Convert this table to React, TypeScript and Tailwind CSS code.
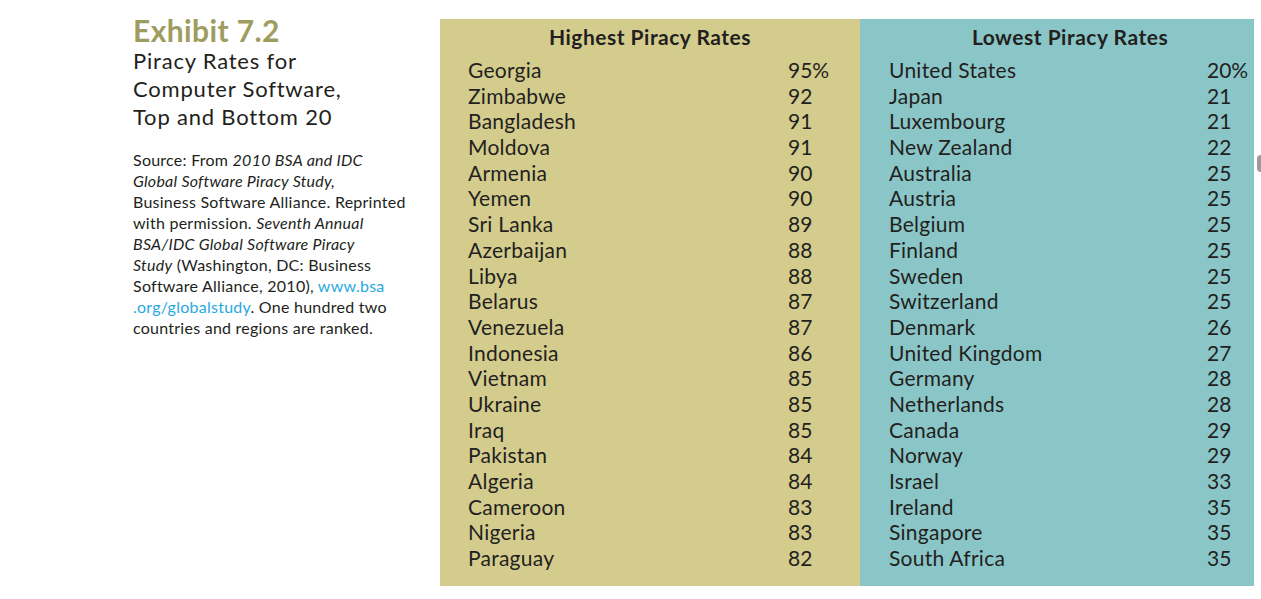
const highest: [string, string][] = [
  ["Georgia", "95%"],
  ["Zimbabwe", "92"],
  ["Bangladesh", "91"],
  ["Moldova", "91"],
  ["Armenia", "90"],
  ["Yemen", "90"],
  ["Sri Lanka", "89"],
  ["Azerbaijan", "88"],
  ["Libya", "88"],
  ["Belarus", "87"],
  ["Venezuela", "87"],
  ["Indonesia", "86"],
  ["Vietnam", "85"],
  ["Ukraine", "85"],
  ["Iraq", "85"],
  ["Pakistan", "84"],
  ["Algeria", "84"],
  ["Cameroon", "83"],
  ["Nigeria", "83"],
  ["Paraguay", "82"],
];

const lowest: [string, string][] = [
  ["United States", "20%"],
  ["Japan", "21"],
  ["Luxembourg", "21"],
  ["New Zealand", "22"],
  ["Australia", "25"],
  ["Austria", "25"],
  ["Belgium", "25"],
  ["Finland", "25"],
  ["Sweden", "25"],
  ["Switzerland", "25"],
  ["Denmark", "26"],
  ["United Kingdom", "27"],
  ["Germany", "28"],
  ["Netherlands", "28"],
  ["Canada", "29"],
  ["Norway", "29"],
  ["Israel", "33"],
  ["Ireland", "35"],
  ["Singapore", "35"],
  ["South Africa", "35"],
];

type PanelProps = {
  title: string;
  rows: [string, string][];
  className: string;
  headClass: string;
  rowClass: string;
};

function RatePanel({ title, rows, className, headClass, rowClass }: PanelProps) {
  return (
    <div className={`flex flex-col pb-[15px] ${className}`}>
      <div className={`flex h-[36px] items-center justify-center text-[21px] font-bold tracking-[0.5px] text-[#231f20] ${headClass}`}>
        {title}
      </div>
      <div className="pt-[2px]">
        {rows.map(([country, rate]) => (
          <div key={country} className={`grid h-[25.7px] items-center text-[21px] leading-[25.7px] text-[#231f20] ${rowClass}`}>
            <span className="tracking-[0.25px]">{country}</span>
            <span>{rate}</span>
          </div>
        ))}
      </div>
    </div>
  );
}

export default function App() {
  return (
    <main
      className="relative h-[599px] w-[1261px] overflow-hidden bg-white"
      style={{ fontFamily: "Lato, 'Open Sans', sans-serif" }}
    >
      <div className="flex pl-[133px] pt-[19px]">
        <section className="w-[307px] shrink-0">
          <h1 className="-mt-[6px] text-[30px] font-bold leading-[34px] tracking-[0.4px] text-[#9e9c5e]">Exhibit 7.2</h1>
          <p className="text-[22px] leading-[28px] tracking-[0.8px] text-[#231f20]">
            Piracy Rates for
            <br />
            Computer Software,
            <br />
            Top and Bottom 20
          </p>
          <p className="mt-[18px] text-[16px] leading-[21px] tracking-[0.25px] text-[#231f20]">
            Source: From <i>2010 BSA and IDC</i>
            <br />
            <i>Global Software Piracy Study,</i>
            <br />
            Business Software Alliance. Reprinted
            <br />
            with permission. <i>Seventh Annual</i>
            <br />
            <i>BSA/IDC Global Software Piracy</i>
            <br />
            <i>Study</i> (Washington, DC: Business
            <br />
            Software Alliance, 2010), <span className="text-[#29a9e0]">www.bsa</span>
            <br />
            <span className="text-[#29a9e0]">.org/globalstudy</span>. One hundred two
            <br />
            countries and regions are ranked.
          </p>
        </section>
        <div className="flex">
          <RatePanel
            title="Highest Piracy Rates"
            rows={highest}
            className="w-[420px] bg-[#d4cc8d]"
            headClass=""
            rowClass="grid-cols-[320px_1fr] pl-[28px]"
          />
          <RatePanel
            title="Lowest Piracy Rates"
            rows={lowest}
            className="w-[394px] bg-[#8ac6c7]"
            headClass="pl-[26px]"
            rowClass="grid-cols-[318px_1fr] pl-[29px]"
          />
        </div>
      </div>
      <div className="absolute right-0 top-[155px] h-[17px] w-[4px] rounded-l-full bg-[#9a9a9a]" />
    </main>
  );
}
